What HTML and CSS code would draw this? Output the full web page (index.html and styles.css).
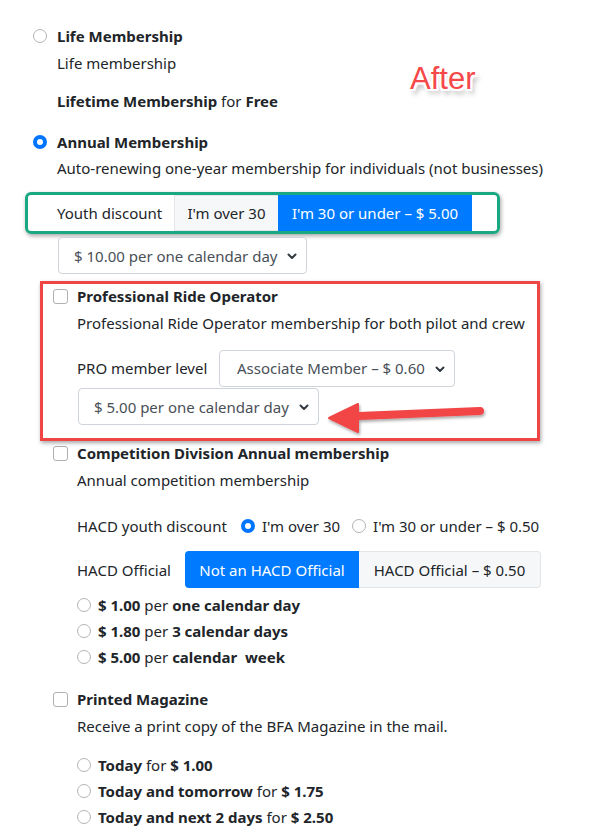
FILE: index.html
```html
<!DOCTYPE html>
<html>
<head>
<meta charset="utf-8">
<link rel="stylesheet" href="styles.css">
</head>
<body>
<div class="page">
  <div class="after">After</div>

  <div class="line mt0"><span class="radio"></span><span class="b">Life Membership</span></div>
  <div class="line text-in mt3">Life membership</div>
  <div class="line text-in mt14"><span><b>Lifetime Membership</b> for <b>Free</b></span></div>

  <div class="line mt17"><span class="radio on"></span><span class="b">Annual Membership</span></div>
  <div class="line text-in mt2">Auto-renewing one-year membership for individuals (not businesses)</div>

  <div class="green">
    <span class="grp-label">Youth discount</span>
    <span class="btn light">I'm over 30</span>
    <span class="btn blue">I'm 30 or under – $ 5.00</span>
  </div>

  <div class="select s1">$ 10.00 per one calendar day<svg class="chev" width="10" height="7" viewBox="0 0 10 7"><polyline points="1.5,1.5 5,5 8.5,1.5" fill="none" stroke="#343a40" stroke-width="2" stroke-linecap="round" stroke-linejoin="round"/></svg></div>

  <div class="redbox">
    <div class="line sub"><span class="check"></span><span class="b">Professional Ride Operator</span></div>
    <div class="line sub-in mt3">Professional Ride Operator membership for both pilot and crew</div>
    <div class="pro-row">
      <span class="pro-label">PRO member level</span>
      <div class="select s2">Associate Member – $ 0.60<svg class="chev" width="10" height="7" viewBox="0 0 10 7"><polyline points="1.5,1.5 5,5 8.5,1.5" fill="none" stroke="#343a40" stroke-width="2" stroke-linecap="round" stroke-linejoin="round"/></svg></div>
    </div>
    <div class="select s3">$ 5.00 per one calendar day<svg class="chev" width="10" height="7" viewBox="0 0 10 7"><polyline points="1.5,1.5 5,5 8.5,1.5" fill="none" stroke="#343a40" stroke-width="2" stroke-linecap="round" stroke-linejoin="round"/></svg></div>
  </div>

  <div class="line sub2"><span class="check"></span><span class="b">Competition Division Annual membership</span></div>
  <div class="line sub-in2 mt3">Annual competition membership</div>
  <div class="line sub-in2 mt22">
    <span class="hacd-label">HACD youth discount</span>
    <span class="radio on"></span><span class="rtext">I'm over 30</span>
    <span class="radio"></span><span class="rtext">I'm 30 or under – $ 0.50</span>
  </div>
  <div class="hacd-row">
    <span class="hacd-off">HACD Official</span>
    <span class="btn blue b3">Not an HACD Official</span>
    <span class="btn light b4">HACD Official – $ 0.50</span>
  </div>
  <div class="line opt mt5"><span class="radio"></span><span><b>$ 1.00</b> per <b>one calendar day</b></span></div>
  <div class="line opt mt2"><span class="radio"></span><span><b>$ 1.80</b> per <b>3 calendar days</b></span></div>
  <div class="line opt mt2"><span class="radio"></span><span><b>$ 5.00</b> per <b>calendar&nbsp; week</b></span></div>

  <div class="line sub2 mt18"><span class="check"></span><span class="b">Printed Magazine</span></div>
  <div class="line sub-in2 mt3">Receive a print copy of the BFA Magazine in the mail.</div>
  <div class="line opt mt15"><span class="radio"></span><span><b>Today</b> for <b>$ 1.00</b></span></div>
  <div class="line opt mt2"><span class="radio"></span><span><b>Today and tomorrow</b> for <b>$ 1.75</b></span></div>
  <div class="line opt mt2"><span class="radio"></span><span><b>Today and next 2 days</b> for <b>$ 2.50</b></span></div>

  <svg class="arrow" width="180" height="50" viewBox="0 0 180 50">
    <defs>
      <filter id="sh" x="-20%" y="-40%" width="140%" height="180%">
        <feDropShadow dx="1" dy="2" stdDeviation="1.5" flood-color="#000" flood-opacity="0.35"/>
      </filter>
    </defs>
    <g filter="url(#sh)">
      <path d="M157 11 L36 16" stroke="#f24545" stroke-width="8" stroke-linecap="round" fill="none"/>
      <path d="M6 18 L35 4 L35 32 Z" fill="#f24545" stroke="#f24545" stroke-width="2" stroke-linejoin="round"/>
    </g>
  </svg>
</div>
</body>
</html>
```

FILE: styles.css
```css
* { box-sizing: border-box; }
html, body { margin: 0; padding: 0; background: #fff; }
body {
  font-family: "Noto Sans", "Open Sans", sans-serif;
  font-size: 15px;
  color: #212529;
}
.page {
  position: relative;
  width: 592px;
  height: 836px;
  padding: 24px 0 0 33px;
  overflow: hidden;
}
.line {
  display: flex;
  align-items: center;
  height: 24px;
  white-space: nowrap;
}
.b, b { font-weight: 700; }
.mt0 { margin-top: 0; }
.mt2 { margin-top: 2px; }
.mt3 { margin-top: 3px; }
.mt5 { margin-top: 5px; }
.mt14 { margin-top: 14px; }
.mt15 { margin-top: 15px; }
.mt17 { margin-top: 17px; }
.mt18 { margin-top: 18px; }
.mt22 { margin-top: 22px; }

.text-in { padding-left: 24px; }

.radio {
  flex: none;
  width: 14px;
  height: 14px;
  border: 1px solid #b4b4b4;
  border-radius: 50%;
  background: #fff;
  margin-right: 10px;
}
.radio.on {
  border: 4px solid #0075ff;
}
.check {
  flex: none;
  width: 15px;
  height: 15px;
  border: 1px solid #b0b0b0;
  border-radius: 3px;
  background: #fff;
  margin-right: 9px;
}

.green {
  margin: 12px 0 0 -8px;
  width: 475px;
  height: 42px;
  border: 3px solid #19a882;
  border-radius: 6px;
  box-shadow: 1px 2px 4px rgba(0,0,0,0.35);
  display: flex;
  align-items: stretch;
  padding-left: 29px;
}
.grp-label {
  display: flex;
  align-items: center;
  width: 117px;
}
.btn {
  display: flex;
  align-items: center;
  justify-content: center;
  white-space: nowrap;
}
.light {
  background: #f6f7f8;
  border: 1px solid #e3e5e8;
}
.blue {
  background: #007bff;
  color: #fff;
}
.green .light { width: 104px; border-right: none; }
.green .blue { width: 194px; }

.select {
  position: relative;
  display: flex;
  align-items: center;
  border: 1px solid #ced4da;
  border-radius: 4px;
  background: #fff;
  color: #495057;
  white-space: nowrap;
}
.chev { position: absolute; top: 15px; }
.s1 {
  margin: 3px 0 0 25px;
  width: 249px;
  height: 37px;
  padding-left: 15px;
}
.s1 .chev { right: 9px; }

.redbox {
  position: relative;
  margin: 7px 0 0 7px;
  width: 500px;
  height: 160px;
  border: 3px solid #f04545;
  box-shadow: 1px 2px 4px rgba(0,0,0,0.35);
  padding: 0 0 0 10px;
}
.sub { height: 24px; }
.sub-in { padding-left: 24px; }
.pro-row {
  display: flex;
  align-items: center;
  margin-top: 15px;
  padding-left: 24px;
  height: 36px;
}
.pro-label { width: 142px; white-space: nowrap; }
.s2 {
  width: 236px;
  height: 37px;
  padding-left: 17px;
}
.s2 .chev { right: 9px; }
.s3 {
  margin: 2px 0 0 25px;
  width: 241px;
  height: 37px;
  padding-left: 15px;
}
.s3 .chev { right: 9px; }

.sub2 { padding-left: 20px; }
.sub-in2 { padding-left: 44px; }
.hacd-label { width: 164px; }
.rtext { margin-left: -3px; margin-right: 12px; }
.hacd-row {
  display: flex;
  align-items: stretch;
  margin-top: 13px;
  padding-left: 44px;
  height: 37px;
}
.hacd-off { display: flex; align-items: center; width: 108px; }
.b3 { width: 174px; border-radius: 4px 0 0 4px; }
.b4 { width: 182px; border-radius: 0 4px 4px 0; border-left: none; }
.opt { padding-left: 44px; }
.opt .radio { margin-right: 7px; }

.after {
  position: absolute;
  left: 410px;
  top: 61px;
  font-family: "Liberation Sans", Arial, sans-serif;
  font-size: 31px;
  color: #f54848;
  text-shadow:
    -2px 0 0 #fff, 2px 0 0 #fff, 0 -2px 0 #fff, 0 2px 0 #fff,
    -2px -2px 0 #fff, 2px -2px 0 #fff, -2px 2px 0 #fff, 2px 2px 0 #fff,
    3px 5px 5px rgba(0,0,0,0.35);
}
.arrow {
  position: absolute;
  left: 323px;
  top: 400px;
}
```
